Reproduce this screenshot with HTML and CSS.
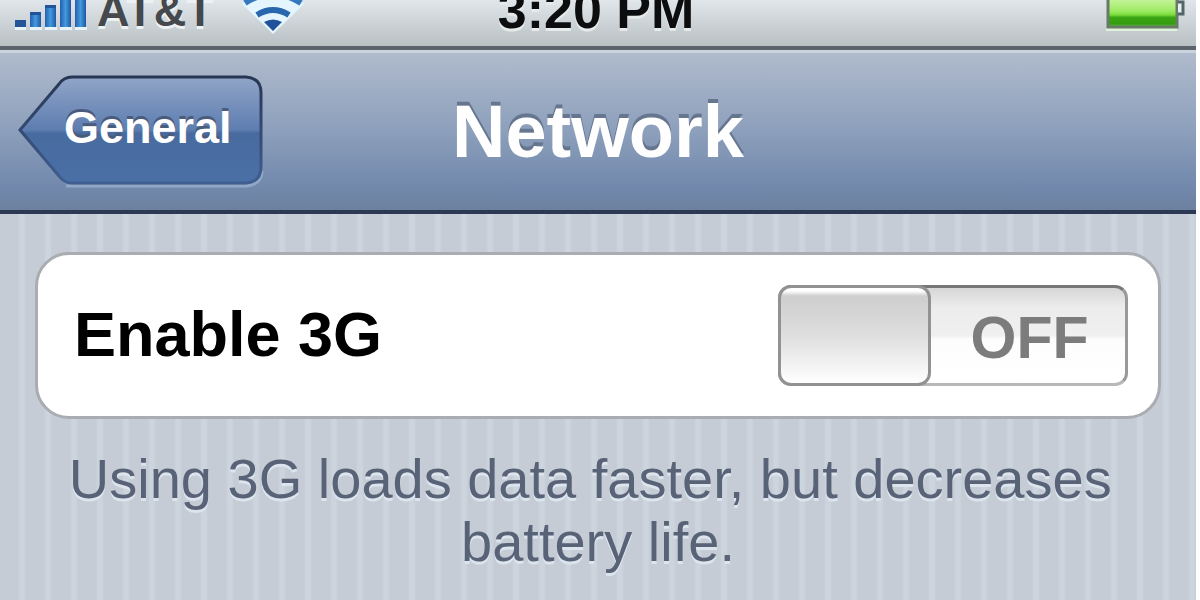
FILE: index.html
```
<!DOCTYPE html>
<html lang="en">

<head>
    <meta charset="utf-8">
    <title>Network</title>
    <link rel="stylesheet" href="styles.css">
    <meta name="viewport" content="width=device-width, initial-scale=1">
</head>

<body>
    <div class="screen">
        <div class="status-bar">
            <div class="status-left">
                <svg class="signal" width="74" height="36" viewBox="0 0 74 36" aria-hidden="true">
                    <defs>
                        <linearGradient id="bar" x1="0" x2="1" y1="0" y2="0">
                            <stop offset="0" stop-color="#245fae" />
                            <stop offset="0.5" stop-color="#439ade" />
                            <stop offset="1" stop-color="#1f57a3" />
                        </linearGradient>
                    </defs>
                    <path d="M0 33h11v3H0zM15 33h12v3H15zM30 33h12v3H30zM45 33h12v3H45zM60 33h12v3H60z" fill="#e6f4fa" />
                    <rect x="0" y="26" width="11" height="7" fill="#235499" />
                    <rect x="15" y="18" width="11" height="15" fill="url(#bar)" />
                    <rect x="30" y="11" width="11" height="22" fill="url(#bar)" />
                    <rect x="45" y="3" width="11" height="30" fill="url(#bar)" />
                    <rect x="60" y="0" width="11" height="33" fill="url(#bar)" />
                    <path d="M15 18h11v3H15zM30 11h11v3H30z" fill="#235499" />
                </svg>
                <span class="carrier">AT&amp;T</span>
                <svg class="wifi" width="66" height="42" viewBox="0 0 66 42" aria-hidden="true">
                    <path d="M33 42L2 12Q33-14 64 12Z" fill="#e4f5fd" />
                    <path d="M33 39L24 30Q33 25 42 30Z" fill="#1f529b" />
                    <path d="M17 23Q33 13 49 23" fill="none" stroke="#2866ae" stroke-width="6" />
                    <path d="M5 11Q33-7 61 11" fill="none" stroke="#3479be" stroke-width="6" />
                </svg>
            </div>
            <span class="time">3:20 PM</span>
            <svg class="battery" width="80" height="38" viewBox="0 0 80 38" aria-hidden="true">
                <defs>
                    <linearGradient id="charge" x1="0" x2="0" y1="0" y2="1">
                        <stop offset="0" stop-color="#d4f7b0" />
                        <stop offset="0.5" stop-color="#9dea63" />
                        <stop offset="0.62" stop-color="#7bdc3c" />
                        <stop offset="0.7" stop-color="#3ca514" />
                        <stop offset="0.9" stop-color="#339d10" />
                        <stop offset="1" stop-color="#61bd45" />
                    </linearGradient>
                </defs>
                <path d="M1 34h71v3H1z" fill="#def2d9" />
                <rect x="3" y="1" width="69" height="32" fill="url(#charge)" stroke="#667a66" stroke-width="3" />
                <path d="M73 8h5v12h-5" fill="#e6eeee" stroke="#54666b" stroke-width="3" />
            </svg>
        </div>

        <div class="nav-bar">
            <button class="back" type="button">
                <svg class="back-shape" width="246" height="114" viewBox="0 0 246 114" aria-hidden="true">
                    <defs>
                        <linearGradient id="back-fill" x1="0" x2="0" y1="0" y2="1">
                            <stop offset="0" stop-color="#91a5c8" />
                            <stop offset="0.5" stop-color="#5d7db0" />
                            <stop offset="0.53" stop-color="#486b9f" />
                            <stop offset="1" stop-color="#4a70a7" />
                        </linearGradient>
                        <linearGradient id="back-line" x1="0" x2="0" y1="0" y2="1">
                            <stop offset="0" stop-color="#273753" />
                            <stop offset="1" stop-color="#405e91" />
                        </linearGradient>
                    </defs>
                    <path d="M48 111H229Q244 109 244 96" fill="none" stroke="#93a8c8" stroke-width="3" />
                    <path d="M2 55L41 9Q46 2 54 2H228Q243 3 243 18V92Q243 107 228 108H54Q46 108 41 101Z" fill="url(#back-fill)" stroke="url(#back-line)" stroke-width="3" />
                </svg>
                <span class="back-text">General</span>
            </button>
            <h1 class="title">Network</h1>
        </div>

        <div class="content">
            <div class="row">
                <label class="row-label" for="enable-3g">Enable 3G</label>
                <div class="switch">
                    <input class="switch-input" type="checkbox" id="enable-3g">
                    <span class="knob"></span>
                    <span class="switch-text">OFF</span>
                </div>
            </div>
            <p class="note">Using 3G loads data faster, but decreases battery life.</p>
        </div>
    </div>
</body>

</html>
```

FILE: styles.css
```
* {
    box-sizing: border-box;
}

body {
    margin: 0;
    background: #fff;
    font-family: "Liberation Sans", Arial, Helvetica, sans-serif;
}

.screen {
    min-height: 100vh;
    margin-right: 4px;
    display: flex;
    flex-direction: column;
    background: #c5ccd5;
}

/* status bar, its content hangs from the bottom edge */
.status-bar {
    height: 50px;
    padding: 0 11px 0 15px;
    display: grid;
    grid-template-columns: 1fr auto 1fr;
    align-items: end;
    align-content: end;
    background: linear-gradient(#e0e6ea, #b9c0c3);
    border-bottom: 4px solid #5b646d;
}

.status-left {
    display: flex;
    align-items: flex-end;
    gap: 8px;
}

.signal {
    margin-bottom: 16px;
}

.carrier {
    font-size: 45px;
    line-height: 50px;
    margin-bottom: 10px;
    font-weight: bold;
    color: #45484c;
    text-shadow: 0 3px 0 #edf1f2;
}

.wifi {
    margin-bottom: 12px;
    margin-left: 18px;
}

.time {
    font-size: 52px;
    line-height: 56px;
    margin: 0 8px 8px 0;
    font-weight: bold;
    color: #0c0d0e;
    text-shadow: 0 3px 0 #e6eaeb;
}

.battery {
    justify-self: end;
    margin-bottom: 14px;
}

/* navigation bar */
.nav-bar {
    height: 164px;
    padding: 0 18px;
    display: grid;
    grid-template-columns: 1fr auto 1fr;
    align-items: center;
    background: linear-gradient(#b0bbcd, #8c9fbb 50%, #7289ad 85%, #6d819f);
    border-top: 3px solid #cad4df;
    border-bottom: 4px solid #2b3954;
}

.back {
    position: relative;
    justify-self: start;
    width: 246px;
    height: 114px;
    padding: 0 32px 8px 46px;
    border: 0;
    background: none;
    font-family: inherit;
    font-size: 45px;
    font-weight: bold;
    color: #fff;
    text-align: left;
    text-shadow: 0 -3px 0 #4a5c7c;
    cursor: pointer;
}

.back-shape {
    position: absolute;
    left: 0;
    top: 0;
}

.back-text {
    position: relative;
}

.title {
    margin: 0;
    font-size: 74px;
    line-height: 84px;
    color: #fff;
    text-shadow: 0 -4px 0 #66768f;
}

/* settings group */
.content {
    flex: 1;
    padding: 38px 35px 0;
    background: repeating-linear-gradient(90deg, #c5ccd5 0, #c5ccd5 18px, #ccd4dd 20px, #ccd4dd 24px, #c5ccd5 26px);
}

.row {
    min-height: 167px;
    padding: 0 30px 0 36px;
    display: flex;
    align-items: center;
    justify-content: space-between;
    background: #fff;
    border: 3px solid #a9acb1;
    border-radius: 34px;
}

.row-label {
    padding-bottom: 4px;
    font-size: 63px;
    line-height: 72px;
    font-weight: bold;
    color: #000;
}

.switch {
    width: 350px;
    height: 101px;
    display: grid;
    grid-template-columns: 153px 1fr;
}

.switch-input {
    grid-area: 1 / 1 / 2 / 3;
    appearance: none;
    margin: 0;
    border: 3px solid #999;
    border-top-color: #777;
    border-bottom-color: #b8b8b8;
    border-radius: 13px;
    background: linear-gradient(#d6d6d6, #ececec 20%, #f0f0f0 50%, #fdfdfd 54%, #fff);
    cursor: pointer;
}

.knob {
    grid-area: 1 / 1;
    border: 3px solid #929292;
    border-radius: 13px;
    background: linear-gradient(#fff 3px, #cecece 8px, #dedede 50%, #fff);
    pointer-events: none;
}

.switch-text {
    grid-area: 1 / 2;
    align-self: center;
    padding-top: 4px;
    font-size: 59px;
    line-height: 68px;
    font-weight: bold;
    color: #7c7c7c;
    text-align: center;
    pointer-events: none;
}

.note {
    margin: 28px 0 0;
    font-size: 56px;
    line-height: 63px;
    color: #596377;
    text-align: center;
    text-shadow: 0 3px 0 #dce4ee;
    white-space: break-spaces;
}
```
